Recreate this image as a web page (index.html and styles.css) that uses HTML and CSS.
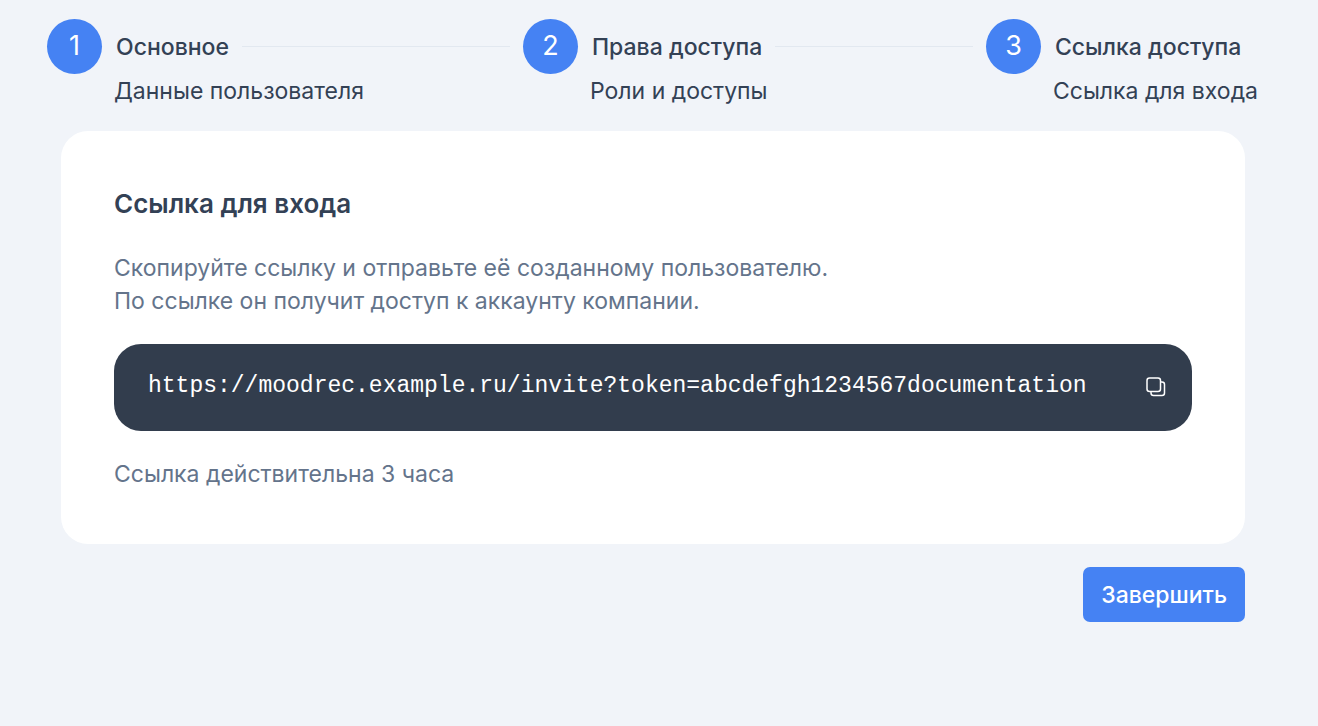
FILE: index.html
```html
<!DOCTYPE html>
<html lang="ru">
<head>
    <meta charset="UTF-8">
    <meta name="viewport" content="width=device-width, initial-scale=1">
    <title>Ссылка для входа</title>
    <link rel="stylesheet" href="styles.css">
</head>
<body>
    <ol class="stepper">
        <li class="step">
            <span class="step-number">1</span>
            <div class="step-body">
                <div class="step-title">Основное</div>
                <div class="step-text">Данные пользователя</div>
            </div>
        </li>
        <li class="step">
            <span class="step-number">2</span>
            <div class="step-body">
                <div class="step-title">Права доступа</div>
                <div class="step-text">Роли и доступы</div>
            </div>
        </li>
        <li class="step">
            <span class="step-number">3</span>
            <div class="step-body">
                <div class="step-title">Ссылка доступа</div>
                <div class="step-text">Ссылка для входа</div>
            </div>
        </li>
    </ol>

    <main class="content">
        <section class="card">
            <h1>Ссылка для входа</h1>
            <p>Скопируйте ссылку и отправьте её созданному пользователю.<br>По ссылке он получит доступ к аккаунту компании.</p>
            <div class="link-box">
                <code id="link">https://moodrec.example.ru/invite?token=abcdefgh1234567documentation</code>
                <button class="copy" type="button" aria-label="Скопировать" onclick="copyLink()">
                    <svg width="20" height="20" viewBox="0 0 20 20" fill="none" stroke="currentColor" stroke-width="1.5">
                        <rect x="1" y="1" width="13.500" height="13.500" rx="2.500"/>
                        <path d="M14.500 5H16a2.500 2.500 0 0 1 2.500 2.500V16a2.500 2.500 0 0 1-2.500 2.500H7.500A2.500 2.500 0 0 1 5 16v-1.500"/>
                    </svg>
                </button>
            </div>
            <p>Ссылка действительна 3 часа</p>
        </section>
        <button class="finish" type="button">Завершить</button>
    </main>

    <script>
        function copyLink() {
            navigator.clipboard.writeText(document.getElementById("link").textContent);
        }
    </script>
</body>
</html>
```
FILE: styles.css
```css
* {
    box-sizing: border-box;
}

body {
    margin: 0;
    background-color: #f1f4f9;
    color: #334155;
    font-family: Inter, sans-serif;
    font-size: 23px;
    line-height: 33px;
}

.stepper {
    display: flex;
    margin: 0;
    padding: 19px 60px 0 47px;
    list-style: none;
}

.step {
    display: flex;
    flex: 1;
    gap: 12px;
    padding-right: 13px;
}

.step:first-child {
    flex-basis: 26px;
}

.step:last-child {
    flex: none;
    padding-right: 0;
}

.step-number {
    flex: none;
    width: 55px;
    height: 55px;
    border-radius: 50%;
    background-color: #4582f3;
    color: white;
    font-size: 27px;
    line-height: 53px;
    text-align: center;
}

.step-body {
    flex: 1;
    white-space: nowrap;
}

.step-title {
    display: flex;
    align-items: center;
    gap: 13px;
    height: 55px;
    padding-left: 2px;
    font-weight: 500;
    line-height: 34px;
}

/* линия до следующего шага */
.step:not(:last-child) .step-title::after {
    content: "";
    flex: 1;
    height: 1px;
    background-color: #e2e8f0;
}

.step-text {
    line-height: 35px;
}

.content {
    display: flex;
    flex-direction: column;
    gap: 23px;
    padding: 22px 73px 24px 61px;
}

.card {
    padding: 53px;
    border-radius: 27px;
    background-color: white;
}

h1 {
    margin: 0 0 28px;
    font-size: 26px;
    font-weight: 600;
    line-height: 40px;
}

p {
    margin: 0;
    color: #64748b;
}

.link-box {
    display: flex;
    align-items: center;
    justify-content: space-between;
    margin: 26px 0 27px;
    padding: 26px 26px 28px 34px;
    border-radius: 27px;
    background-color: #323d4d;
    color: white;
}

.link-box code {
    font-family: "Liberation Mono", monospace;
    font-size: 23px;
}

.copy {
    display: flex;
    padding: 0;
    border: none;
    background: none;
    color: white;
    cursor: pointer;
}

.finish {
    align-self: flex-end;
    padding: 12px 18px 10px;
    border: none;
    border-radius: 7px;
    background-color: #4582f3;
    color: white;
    font: inherit;
    font-weight: 500;
    cursor: pointer;
}

.finish:hover {
    background-color: #2f6fe4;
}
```
